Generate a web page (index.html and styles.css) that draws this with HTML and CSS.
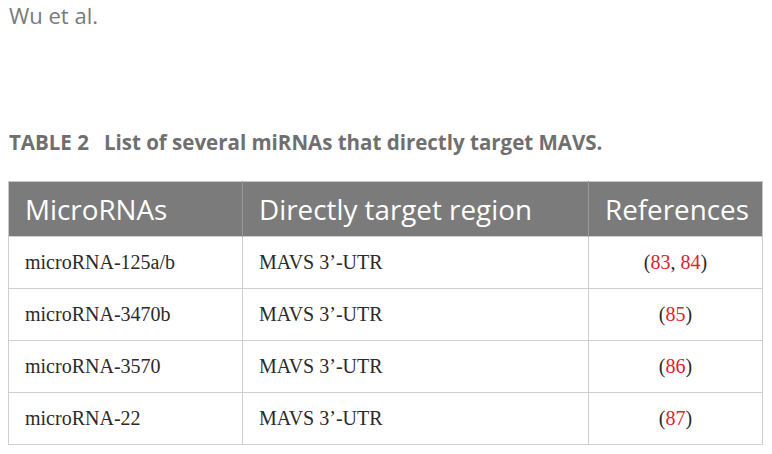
FILE: index.html
```html
<!DOCTYPE html>
<html>
<head>
<meta charset="utf-8">
<link rel="stylesheet" href="styles.css">
</head>
<body>
<div class="page">
  <div class="running">Wu et al.</div>
  <div class="caption"><span class="label">TABLE 2</span><span class="title">List of several miRNAs that directly target MAVS.</span></div>
  <table class="tbl">
    <thead>
      <tr><th class="c1">MicroRNAs</th><th class="c2">Directly target region</th><th class="c3">References</th></tr>
    </thead>
    <tbody>
      <tr><td>microRNA-125a/b</td><td>MAVS 3’-UTR</td><td class="ref">(<span class="r">83</span>, <span class="r">84</span>)</td></tr>
      <tr><td>microRNA-3470b</td><td>MAVS 3’-UTR</td><td class="ref">(<span class="r">85</span>)</td></tr>
      <tr><td>microRNA-3570</td><td>MAVS 3’-UTR</td><td class="ref">(<span class="r">86</span>)</td></tr>
      <tr><td>microRNA-22</td><td>MAVS 3’-UTR</td><td class="ref">(<span class="r">87</span>)</td></tr>
    </tbody>
  </table>
</div>
</body>
</html>
```
FILE: styles.css
```css
html, body { margin: 0; padding: 0; background: #fff; }
.page { padding: 0 9px 0 8px; }
.running {
  font-family: "Open Sans", sans-serif;
  font-size: 22px;
  color: #7a7a7a;
  line-height: 30px;
  padding: 0 0 0 1px;
}
.caption {
  margin-top: 99px;
  padding-left: 1px;
  font-family: "Open Sans", sans-serif;
  font-size: 20.5px;
  font-weight: 700;
  color: #6f6f6f;
  line-height: 26px;
}
.caption .label { margin-right: 15px; }
.tbl {
  margin-top: 26px;
  width: 755px;
  border-collapse: collapse;
  table-layout: fixed;
  border: 1px solid #c8c8c8;
}
.tbl th {
  background: #7b7b7b;
  color: #fff;
  font-family: "Open Sans", sans-serif;
  font-weight: 400;
  font-size: 27.8px;
  height: 54px;
  padding: 0 16px;
  text-align: left;
  border-left: 1px solid #999;
}
.tbl th.c1 { width: 201px; border-left: none; }
.tbl th.c2 { width: 313px; }
.tbl th.c3 { text-align: center; }
.tbl td {
  font-family: "Liberation Serif", serif;
  font-size: 20px;
  color: #2a2a2a;
  height: 51px;
  padding: 0 16px;
  border: 1px solid #cfcfcf;
}
.tbl td.ref { text-align: center; }
.r { color: #e0222a; }
```
